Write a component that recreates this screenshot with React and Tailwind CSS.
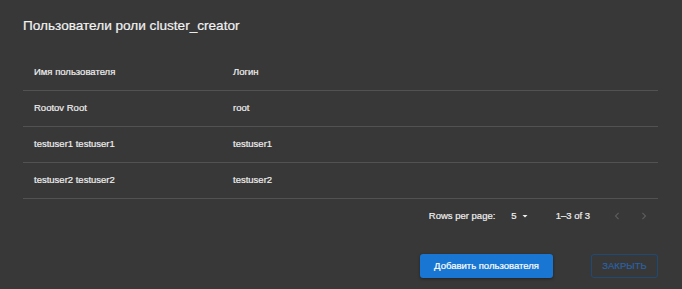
import React from 'react';

const rows = [
  { name: 'Rootov Root', login: 'root' },
  { name: 'testuser1 testuser1', login: 'testuser1' },
  { name: 'testuser2 testuser2', login: 'testuser2' },
];

const Chevron = ({ dir }) => (
  <svg width="14" height="14" viewBox="0 0 24 24" className="text-[#5c5c5c]">
    {dir === 'left' ? (
      <path d="M15.41 7.41 14 6l-6 6 6 6 1.41-1.41L10.83 12z" fill="currentColor" />
    ) : (
      <path d="M10 6 8.59 7.41 13.17 12l-4.58 4.59L10 18l6-6z" fill="currentColor" />
    )}
  </svg>
);

export default function App() {
  return (
    <div
      className="w-[682px] h-[289px] bg-[#383838] text-[#efefef] flex flex-col px-[23px] pt-[16px] [-webkit-text-stroke:0.2px_currentColor]"
      style={{ fontFamily: '"Liberation Sans", Arial, sans-serif' }}
    >
      <h2 className="text-[13.6px] leading-[20px] text-[#f2f2f2]">Пользователи роли cluster_creator</h2>

      <div className="mt-[19px] w-[635px] text-[9.5px]">
        <div className="flex h-[36px] items-center border-b border-[#525252]">
          <div className="w-[210px] pl-[11px]">Имя пользователя</div>
          <div>Логин</div>
        </div>
        {rows.map((r) => (
          <div key={r.login} className="flex h-[36px] items-center border-b border-[#525252]">
            <div className="w-[210px] pl-[11px]">{r.name}</div>
            <div>{r.login}</div>
          </div>
        ))}
        <div className="flex h-[34px] items-center justify-end pr-[7px]">
          <span className="mr-[16px]">Rows per page:</span>
          <span className="flex items-center gap-[2px] mr-[25px]">
            5
            <svg width="12" height="12" viewBox="0 0 24 24">
              <path d="M7 10l5 5 5-5z" fill="currentColor" />
            </svg>
          </span>
          <span className="mr-[20px]">1–3 of 3</span>
          <span className="flex items-center gap-[13px]">
            <Chevron dir="left" />
            <Chevron dir="right" />
          </span>
        </div>
      </div>

      <div className="mt-[21px] w-[635px] flex justify-end gap-[38px]">
        <button className="h-[24px] w-[133px] rounded-[3px] bg-[#1976d2] text-white text-[9.5px] shadow-[0_1px_3px_rgba(0,0,0,0.4)]">
          Добавить пользователя
        </button>
        <button className="h-[24px] w-[67px] rounded-[3px] border border-[#1f4a78] text-[#2a62a3] text-[9.5px]">
          ЗАКРЫТЬ
        </button>
      </div>
    </div>
  );
}
